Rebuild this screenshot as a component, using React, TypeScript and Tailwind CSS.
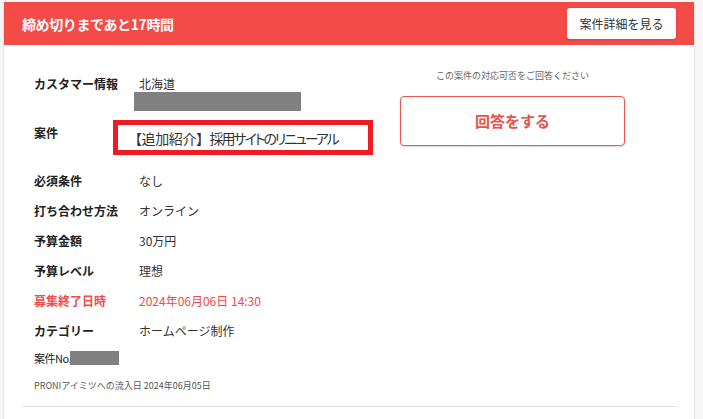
import React from "react";

const rows = [
  { label: "必須条件", value: "なし" },
  { label: "打ち合わせ方法", value: "オンライン" },
  { label: "予算金額", value: "30万円" },
  { label: "予算レベル", value: "理想" },
  { label: "募集終了日時", value: "2024年06月06日 14:30", alert: true },
  { label: "カテゴリー", value: "ホームページ制作" },
];

const App: React.FC = () => {
  return (
    <div className="min-h-screen bg-[#f7f7f7] pt-[2px] font-['Noto_Sans_CJK_JP','Noto_Sans',sans-serif]">
      <div className="ml-[3px] w-[692px] min-h-[417px] border-x border-[#e4e4e4] bg-white">
        {/* deadline bar */}
        <div className="flex h-[43px] items-center justify-between bg-[#f34b47] pl-[18px] pr-[18px]">
          <span className="text-[14px] font-bold leading-none tracking-[-0.4px] text-white">
            締め切りまであと17時間
          </span>
          <button className="h-[31px] w-[109px] rounded-[3px] bg-white text-[12px] leading-none text-[#333] shadow-sm">
            案件詳細を見る
          </button>
        </div>

        <div className="flex">
          {/* details */}
          <div className="w-[396px] pl-[30px] pt-[30px]">
            <div className="flex">
              <span className="w-[105px] text-[12px] font-bold leading-[18px] text-[#222]">
                カスタマー情報
              </span>
              <div className="flex flex-col">
                <span className="text-[12px] leading-[18px] text-[#333]">北海道</span>
                <div className="-ml-[5px] -mt-[1px] h-[19px] w-[167px] bg-[#808080]"></div>
              </div>
            </div>

            <div className="mt-[9px] flex">
              <span className="w-[105px] pt-[4px] text-[12px] font-bold leading-[18px] text-[#222]">
                案件
              </span>
              <div className="-ml-[26px] flex h-[35px] w-[260px] items-center border-[5px] border-[#ed1c24] pl-[10px]">
                <span className="whitespace-nowrap text-[14px] leading-none tracking-[-0.4px] text-[#333]">
                  【追加紹介】
                </span>
                <span className="whitespace-nowrap text-[14px] leading-none tracking-[-2.1px] text-[#333] [font-feature-settings:'palt']">
                  採用サイトのリニューアル
                </span>
              </div>
            </div>

            <div className="mt-[11px] flex flex-col">
              {rows.map((row, i) => (
                <div key={i} className="flex h-[30px] items-center">
                  <span
                    className={
                      row.alert
                        ? "w-[105px] text-[12px] font-bold leading-[18px] text-[#f24a48]"
                        : "w-[105px] text-[12px] font-bold leading-[18px] text-[#222]"
                    }
                  >
                    {row.label}
                  </span>
                  <span
                    className={
                      row.alert
                        ? "text-[12px] leading-[18px] text-[#f24a48]"
                        : "text-[12px] leading-[18px] text-[#333]"
                    }
                  >
                    {row.value}
                  </span>
                </div>
              ))}
            </div>

            <div className="mt-[5px] flex h-[14px] items-center">
              <span className="text-[11px] leading-none tracking-[-0.5px] text-[#222]">案件No.</span>
              <div className="-ml-[1px] h-[14px] w-[49px] bg-[#808080]"></div>
            </div>

            <div className="mt-[15px] text-[9px] leading-[12px] text-[#555]">
              PRONIアイミツへの流入日 2024年06月05日
            </div>
          </div>

          {/* answer */}
          <div className="flex w-[225px] flex-col items-center pt-[25px]">
            <span className="text-[9px] leading-[12px] text-[#666]">
              この案件の対応可否をご回答ください
            </span>
            <button className="mt-[14px] h-[50px] w-[225px] rounded-[4px] border border-[#e8574f] bg-white text-[15px] font-bold text-[#e5534b] shadow-[0_1px_2px_rgba(0,0,0,0.15)]">
              回答をする
            </button>
          </div>
        </div>

        <div className="ml-[18px] mr-[17px] mt-[14px] border-t border-[#e2e2e2]"></div>
      </div>
    </div>
  );
};

export default App;
